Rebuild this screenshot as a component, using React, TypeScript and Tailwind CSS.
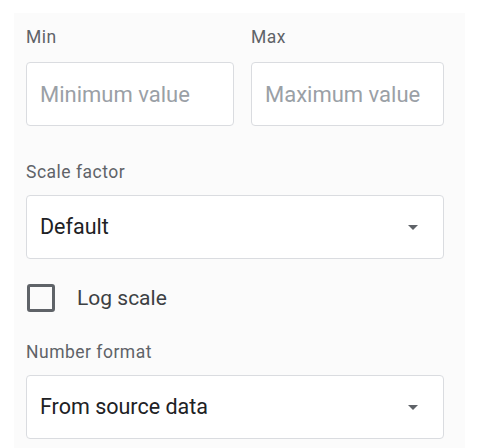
import React from 'react';

const font = { fontFamily: 'Roboto, "Noto Sans", sans-serif' };

const Label = ({ children }: { children: React.ReactNode }) => (
  <div className="h-[20px] text-[17.5px] leading-[20px] tracking-[0.5px] text-[#5f6368]">{children}</div>
);

const Caret = () => (
  <svg width="10" height="5" viewBox="0 0 10 5" className="shrink-0">
    <path d="M0 0h10L5 5z" fill="#5f6368" />
  </svg>
);

const SelectBox = ({ value }: { value: string }) => (
  <div className="flex h-[64px] w-[418px] items-center justify-between rounded-[4px] border border-[#dadce0] bg-white pl-[13px] pr-[25px]">
    <span className="text-[21.5px] leading-[28px] text-[#202124]">{value}</span>
    <Caret />
  </div>
);

export default function App() {
  return (
    <div className="h-[448px] w-[483px] bg-white pl-[14px] pt-[13px]" style={font}>
      <div className="h-[435px] w-[451px] bg-[#fbfbfb] pl-[12px] pt-[14px]">
        <div className="flex gap-[17px]">
          <div className="flex w-[208px] flex-col gap-[15px]">
            <Label>Min</Label>
            <input
              placeholder="Minimum value"
              className="h-[64px] w-full rounded-[4px] border border-[#dadce0] bg-white px-[13px] text-[22px] text-[#202124] outline-none placeholder:text-[#9aa0a6]"
            />
          </div>
          <div className="flex w-[193px] flex-col gap-[15px]">
            <Label>Max</Label>
            <input
              placeholder="Maximum value"
              className="h-[64px] w-full rounded-[4px] border border-[#dadce0] bg-white px-[13px] text-[22px] text-[#202124] outline-none placeholder:text-[#9aa0a6]"
            />
          </div>
        </div>

        <div className="mt-[36px] flex flex-col gap-[13px]">
          <Label>Scale factor</Label>
          <SelectBox value="Default" />
        </div>

        <label className="mt-[25px] flex h-[28px] items-center gap-[22px] pl-[1px]">
          <span className="h-[28px] w-[28px] rounded-[3px] border-[3px] border-[#5f6368]" />
          <span className="text-[21px] leading-[28px] text-[#3c4043]">Log scale</span>
        </label>

        <div className="mt-[30px] flex flex-col gap-[13px]">
          <Label>Number format</Label>
          <SelectBox value="From source data" />
        </div>
      </div>
    </div>
  );
}
